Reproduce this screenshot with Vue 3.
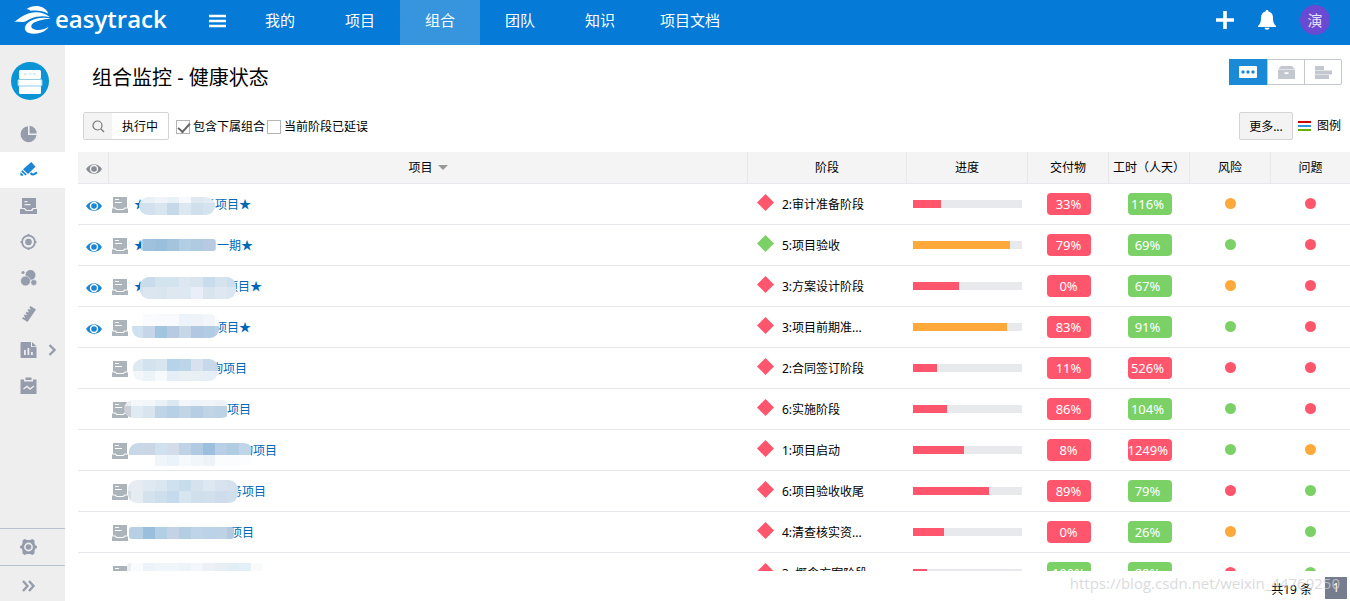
<script setup>
import { ref } from 'vue'

const nav = ['我的', '项目', '组合', '团队', '知识', '项目文档']
const activeNav = ref('组合')
const includeSub = ref(true)
const delayed = ref(false)

const side = [
  { id: 'pie', label: '概览' },
  { id: 'monitor', label: '监控' },
  { id: 'inbox', label: '项目' },
  { id: 'target', label: '目标' },
  { id: 'bubbles', label: '资源' },
  { id: 'ruler', label: '度量' },
  { id: 'report', label: '报表', more: true },
  { id: 'clip', label: '计划' },
]

const NAME_X = 134
const GRID_X = 131
const CELL = 12

/* mask: x/y/w/h of the covered area; bands: [y, height, first column, colours] */
const rows = [
  { eye: 1, star: 1, tail: '务项目★', tx: 203, mask: [139, 13, 76, 18], bands: [[13, 6, 0, '#e3ecf4 #e9f0f6 #f0f4f9 #e8f0f8 #f6f8fb #dfe8f1 #e3ecf4'], [19, 12, 0, '#cfe0ee #d2e1ed #d9e6ef #c5d9eb #dbe7f1 #cfdfec #d4e3ee']], stage: '2:审计准备阶段', d: 'r', p: 26, pc: 'r', dv: '33%', dc: 'r', h: '116%', hc: 'g', risk: 'o', issue: 'r' },
  { eye: 1, star: 1, tail: '一期★', tx: 217, mask: [141, 14, 75, 12], bands: [[14, 12, 0, '#b4d2e8 #9fc1dd #99bfdc #a4c3dd #b1cee4 #aecbe2 #b7cae2 #c5d7e9']], stage: '5:项目验收', d: 'g', p: 89, pc: 'o', dv: '79%', dc: 'r', h: '69%', hc: 'g', risk: 'g', issue: 'r' },
  { eye: 1, star: 1, tail: '项目★', tx: 226, mask: [140, 11, 96, 22], bands: [[11, 10, 0, '#c8dcec #c8dcec #d4e4ef #d3e3ef #dce7f1 #d8e5ef #c9dceb #d4e3ee #cddfec'], [21, 12, 0, '#d2e1ed #dbe6f0 #d9e5ef #dfe8f1 #dce8f2 #e9eef8 #d9e4ef #dfe8f2 #dae6f0']], stage: '3:方案设计阶段', d: 'r', p: 42, pc: 'r', dv: '0%', dc: 'r', h: '67%', hc: 'g', risk: 'o', issue: 'r' },
  { eye: 1, tail: '项目★', tx: 215, mask: [132, 7, 87, 24], bands: [[7, 12, 1, '#f9fbfd #f8fafd #f8fafd #edf3fa #eef3fa #f2f6fb #fbfcfd'], [19, 12, 0, '#cfe0ee #c5d6e8 #a2c5df #b7cae1 #c8d7e8 #b2c7e1 #b1cce3 #b7d0e5']], stage: '3:项目前期准...', d: 'r', p: 86, pc: 'o', dv: '83%', dc: 'r', h: '91%', hc: 'g', risk: 'g', issue: 'r' },
  { tail: '询项目', tx: 211, mask: [133, 11, 85, 22], bands: [[11, 12, 0, '#dfe9f2 #d2e3ef #d8e5ef #b7d3e9 #bdd5e8 #d8e2ee #c6d8e9 #c3d6e7'], [23, 10, 0, '#f3f7fb #edf4f9 #f7fafc #e5edf6 #e8f0f4 #e8f0f5 #e6eef7 #e5eef7']], stage: '2:合同签订阶段', d: 'r', p: 22, pc: 'r', dv: '11%', dc: 'r', h: '526%', hc: 'r', risk: 'r', issue: 'r' },
  { tail: '项目', tx: 227, mask: [124, 11, 107, 18], bands: [[11, 6, -1, '#e9ecf0 #f4f6f8 #f2f6f9 #eaf1f6 #dce9f2 #f2f6fa #edf3f8 #f0f4f8 #edf2f7'], [17, 12, -1, '#cbd0d8 #e0eaf2 #d8e5ef #bfd5e7 #b8d0e5 #c1d5e6 #b7cde3 #c1d4e5 #bdd3e5']], stage: '6:实施阶段', d: 'r', p: 31, pc: 'r', dv: '86%', dc: 'r', h: '104%', hc: 'g', risk: 'g', issue: 'r' },
  { tail: '询项目', tx: 241, mask: [129, 13, 124, 24], bands: [[13, 12, -1, '#c5d5e5 #c9d8e8 #cad5e6 #cfe0ee #d5dce9 #c0d3e6 #b2cae1 #9bbfdc #b9cfe5 #b1cde2 #bfd5e8'], [25, 11, 2, '#f0f5fa #eaf3f9 #f5f9fc #f1f6fb #edf3f8 #fafcfd #fbfcfd #fcfdfe']], stage: '1:项目启动', d: 'r', p: 47, pc: 'r', dv: '8%', dc: 'r', h: '1249%', hc: 'r', risk: 'g', issue: 'o' },
  { tail: '务项目', tx: 230, mask: [128, 9, 110, 23], bands: [[9, 11, -1, '#e4eaf0 #e6ecf2 #dfe9f1 #dae7f1 #cfe1ee #c8ddeb #d6e3ef #dee8f2 #d8e3ef #d5e2ed'], [20, 12, -1, '#d6dce3 #e5edf3 #d3e2ed #cddfed #c5dbed #d7e5f0 #cfdfec #d2e0ec #cedceb #cfe0ec']], stage: '6:项目验收收尾', d: 'r', p: 70, pc: 'r', dv: '89%', dc: 'r', h: '79%', hc: 'g', risk: 'r', issue: 'g' },
  { tail: '项目', tx: 230, mask: [129, 15, 105, 12], bands: [[15, 12, -1, '#b9cee0 #b6cfe4 #99bfdc #b1cee3 #c3d3e5 #b3cde3 #bfd4e9 #bbd2e8 #bed2e6 #b2c9e0']], stage: '4:清查核实资...', d: 'r', p: 28, pc: 'r', dv: '0%', dc: 'r', h: '26%', hc: 'g', risk: 'o', issue: 'g' },
  { tail: '', tx: 263, mask: [127, 10, 136, 12], bands: [[10, 12, -1, '#eceef1 #fafbfd #edf3fb #f0f5f9 #eff5f9 #edf4f9 #f3f6fb #edf1f5 #e7eff5 #e1eef6 #e4f0f7 #f8fafc']], stage: '3: 概念方案阶段', d: 'r', p: 13, pc: 'r', dv: '100%', dc: 'g', h: '88%', hc: 'g', risk: 'r', issue: 'g' },
]

const cells = (r) =>
  r.bands.flatMap(([y, h, c, list]) =>
    list.split(' ').map((fill, i) => ({ x: GRID_X + (c + i) * CELL - r.mask[0], y, h, fill })),
  )

const maskStyle = (r) => ({
  width: r.mask[2] + 'px',
  marginLeft: r.mask[0] - NAME_X - (r.star ? CELL : 0) + 'px',
  marginRight: r.tx - r.mask[0] - r.mask[2] + 'px',
})
</script>

<template>
  <div class="page">
    <header class="top">
      <a class="logo" href="#">
        <svg width="38" height="30" viewBox="0 0 38 30" aria-hidden="true">
          <path fill="#fff" d="M11.500 4C15 1.500 20 .500 24 1.300c5 1 8 3.700 9.300 7.500C28 5.600 21 5 15.500 5.800 14.500 4.800 13 4.200 11.500 4Z" />
          <path fill="#fff" d="M-.800 17C5 12.500 9 10 14 8.300c7-2 15-1.500 21 4C29 10.500 22 11 16 13.500c-3 1.300-4.500 3-8 3.500-3 .300-6-.500-8.800 0Z" />
          <path fill="#fff" d="M36 13.500c-6-1.500-13-1-18.500 1.500-6 2.500-9 7-7 10.500 2 3.500 9 4 15 2.300 4-1.200 6.800-3.300 8-6-4 2.700-9 3.700-13 3-4-.800-5.500-3.500-3-6C20.500 16 27 14.500 36 13.500Z" />
        </svg>
        <span>easytrack</span>
      </a>
      <button class="burger" aria-label="菜单">
        <svg width="17" height="14"><path d="M0 2h17M0 7h17M0 12h17" stroke="#fff" stroke-width="2.400" /></svg>
      </button>
      <nav>
        <a v-for="n in nav" :key="n" href="#" :class="{ on: n === activeNav }" @click.prevent="activeNav = n">{{ n }}</a>
      </nav>
      <div class="tools">
        <button aria-label="新建">
          <svg width="18" height="18"><path d="M9 0v18M0 9h18" stroke="#fff" stroke-width="3.600" /></svg>
        </button>
        <button aria-label="通知">
          <svg width="18" height="20" viewBox="0 0 18 20">
            <path fill="#fff" d="M9 0c1 0 1.500.700 1.500 1.500C13.500 2.300 15 4.500 15 8c0 4 .800 6 3 8v1H0v-1c2.200-2 3-4 3-8 0-3.500 1.500-5.700 4.500-6.500C7.500.700 8 0 9 0ZM6.500 17.800h5a2.500 2 0 0 1-5 0Z" />
          </svg>
        </button>
        <button class="user">演</button>
      </div>
    </header>

    <div class="body">
      <aside>
        <a class="badge-logo" href="#" aria-label="组合">
          <svg width="38" height="38">
            <circle cx="19" cy="19" r="19" fill="#0a94d6" />
            <rect x="8" y="8" width="22" height="9" rx="1.500" fill="#fff" />
            <path d="M13 12h3M17.500 12h3M22 12h3" stroke="#cfe8f5" stroke-width="1.500" />
            <rect x="8" y="23" width="22" height="9" rx="1.500" fill="#fff" />
            <rect x="7" y="17.500" width="24" height="6.500" rx="1" fill="#fff" stroke="#8fcdea" />
          </svg>
        </a>
        <a v-for="s in side" :key="s.id" href="#" class="item" :class="{ on: s.id === 'monitor' }" :aria-label="s.label">
          <svg width="18" height="18" viewBox="0 0 18 18" fill="currentColor">
            <template v-if="s.id === 'pie'">
              <path d="M8 1.200V10h8.500A8 8 0 1 1 8 1.200Z" />
              <path d="M9.600.800A8 8 0 0 1 16.700 8.400H9.600Z" />
            </template>
            <template v-else-if="s.id === 'monitor'">
              <path d="m11.300 1 4.200 4.800L8 13l-5-4.700Z" />
              <path d="m2.200 9 4.600 4.400-1.400 1.200L1.200 10.500ZM.500 11.300l3 2.700-1.300 1-1.900-.800Z" />
              <path d="M10.500 12c2 2.400 3.500 1.800 6.500-.600" fill="none" stroke="currentColor" stroke-width="2" />
            </template>
            <template v-else-if="s.id === 'inbox'">
              <path fill-rule="evenodd" d="M2 1h14v10h-3.500L11 13H6.500L5 11H2ZM4.500 4v1.200h3V4Zm0 3v1.200h6V7Z" />
              <path d="M0 12h4.200l1.500 2h6.600l1.500-2H17v5H0Z" />
            </template>
            <template v-else-if="s.id === 'target'">
              <circle cx="8.500" cy="9" r="6.400" fill="none" stroke="currentColor" stroke-width="1.800" />
              <circle cx="8.500" cy="9" r="3.300" />
              <path d="M7.500 1h2v2h-2ZM7.500 15h2v2h-2ZM.500 8h2v2h-2ZM14.500 8h2v2h-2Z" />
            </template>
            <template v-else-if="s.id === 'bubbles'">
              <circle cx="10.500" cy="6" r="5" />
              <circle cx="5.500" cy="12" r="4.900" stroke="#eee" stroke-width=".600" />
              <circle cx="13.800" cy="13.500" r="2.900" stroke="#eee" stroke-width=".500" />
              <circle cx="3" cy="3.500" r="1.600" />
            </template>
            <template v-else-if="s.id === 'ruler'">
              <path d="m10.500 1 5.500 3.500L7.500 17 2 13.500l1-1.400 1.300.900.700-1-1.300-.900 1.200-1.800 1.300.900.700-1-1.300-.900 1.200-1.800 1.300.900.700-1-1.300-.900 1.200-1.700 1.300.900.700-1-1.300-.900Z" />
            </template>
            <template v-else-if="s.id === 'report'">
              <path fill-rule="evenodd" d="M1.500 1H11v5h5.500v11h-15a1 1 0 0 1-1-1V2a1 1 0 0 1 1-1ZM4 9v5h1.800V9Zm3.500-2v7h1.800V7ZM11 11v3h1.800v-3Z" />
              <path d="M12 1 16.500 5.300H12Z" />
            </template>
            <template v-else>
              <path fill-rule="evenodd" d="M1 2.500h3v2h9v-2h3.500V17h-16V2.500Z" />
              <path d="M5.500.500h6v2.500h-6Z" />
              <path d="m3.500 12 3.500-2.500 3 2.500 4-3" fill="none" stroke="#eee" stroke-width="1.400" />
            </template>
          </svg>
          <svg v-if="s.more" class="chev" width="9" height="14"><path d="m1.500 2 5 5-5 5" fill="none" stroke="currentColor" stroke-width="2.400" /></svg>
        </a>
        <div class="fill"></div>
        <a class="item line" href="#" aria-label="设置">
          <svg width="18" height="18" viewBox="0 0 18 18" fill="currentColor">
            <path fill-rule="evenodd" d="M4.500 1 7 2h3l2.500-1 2 1.500v2.700l1 2.300 1.500.500v2l-1.500.500-1 2.300v2.700l-2 1.500L10 16H7l-2.500 1-2-1.500v-2.700l-1-2.300L0 10V8l1.500-.500 1-2.300V2.500ZM8.500 4.600a4.400 4.400 0 1 0 0 8.800 4.400 4.400 0 0 0 0-8.800Z" />
            <circle cx="8.500" cy="9" r="2.800" />
          </svg>
        </a>
        <a class="item line last" href="#" aria-label="展开">
          <svg width="18" height="18"><path d="m3 4 4.500 5L3 14M9 4l4.500 5L9 14" fill="none" stroke="currentColor" stroke-width="2.400" /></svg>
        </a>
      </aside>

      <main>
        <div class="title-row">
          <h1>组合监控 - 健康状态</h1>
          <div class="views">
            <button class="on" aria-label="健康状态">
              <svg width="18" height="12"><rect width="18" height="12" rx="1" fill="#fff" /><g fill="#1a8ad6"><circle cx="4" cy="6" r="1.700" /><circle cx="9" cy="6" r="1.700" /><circle cx="14" cy="6" r="1.700" /></g></svg>
            </button>
            <button aria-label="卡片">
              <svg width="17" height="13"><path fill="#c3c7cf" fill-rule="evenodd" d="M3 0h11l3 3.500H0ZM0 4h17v9H0Zm6.500 2.200v1.800h4V6.200Z" /></svg>
            </button>
            <button aria-label="甘特图">
              <svg width="17" height="13"><path fill="#c3c7cf" d="M0 0h9v4H0ZM0 4.500h17v4H0ZM0 9h14v4H0Z" /></svg>
            </button>
          </div>
        </div>

        <div class="toolbar">
          <button class="filter">
            <span class="lens"><svg width="13" height="13" fill="none" stroke="#777" stroke-width="1.200"><circle cx="5.500" cy="5.500" r="4.500" /><path d="m9 9 3 3" /></svg></span>
            <span class="state">执行中</span>
          </button>
          <label><input v-model="includeSub" type="checkbox" /><span>包含下属组合</span></label>
          <label><input v-model="delayed" type="checkbox" /><span>当前阶段已延误</span></label>
          <button class="more">更多...</button>
          <a class="legend" href="#"><i></i>图例</a>
        </div>

        <div class="table-box">
          <table>
            <colgroup>
              <col class="c-eye" /><col /><col class="c-stage" /><col class="c-prog" />
              <col class="c-num" /><col class="c-num" /><col class="c-num" /><col class="c-last" />
            </colgroup>
            <thead>
              <tr>
                <th aria-label="关注">
                  <svg class="eye" width="16" height="10" viewBox="0 0 16 10"><path fill="#888d93" fill-rule="evenodd" d="M0 5c4-6.500 12-6.500 16 0-4 6.500-12 6.500-16 0Zm8-4.200a4.200 4.200 0 1 0 0 8.400 4.200 4.200 0 0 0 0-8.400Z" /><circle cx="8" cy="5" r="2.800" fill="#888d93" /></svg>
                </th>
                <th>项目<svg class="sort" width="10" height="5"><path d="M0 0h10L5 5Z" fill="#999" /></svg></th>
                <th>阶段</th>
                <th>进度</th>
                <th>交付物</th>
                <th>工时（人天）</th>
                <th>风险</th>
                <th>问题</th>
              </tr>
            </thead>
            <tbody>
              <tr v-for="(r, i) in rows" :key="i">
                <td class="eye-cell">
                  <svg v-if="r.eye" class="eye" width="16" height="10" viewBox="0 0 16 10"><path fill="#1a86d6" fill-rule="evenodd" d="M0 5c4-6.500 12-6.500 16 0-4 6.500-12 6.500-16 0Zm8-4.200a4.200 4.200 0 1 0 0 8.400 4.200 4.200 0 0 0 0-8.400Z" /><circle cx="8" cy="5" r="2.800" fill="#1a86d6" /></svg>
                </td>
                <td>
                  <a class="name" href="#">
                    <svg class="file" width="16" height="16" viewBox="0 0 16 16"><path fill="#abb3bb" d="M1 0h14v10.500h-2.500L11 12H5l-1.500-1.500H1ZM0 11.500h3l1.500 1.500h7l1.500-1.500h3V16H0Z" /><path d="M3 2.500h4M3 5.500h7" stroke="#fff" /></svg>
                    <span v-if="r.star" class="star">★</span>
                    <svg class="mask" height="40" :style="maskStyle(r)">
                      <defs>
                        <clipPath :id="'m' + i"><rect x="0" :y="r.mask[1]" :width="r.mask[2]" :height="r.mask[3]" :rx="r.mask[3] > 12 ? 9 : 3" /></clipPath>
                      </defs>
                      <g :clip-path="`url(#m${i})`" shape-rendering="crispEdges">
                        <rect v-for="(c, k) in cells(r)" :key="k" :x="c.x" :y="c.y" width="12" :height="c.h" :fill="c.fill" />
                      </g>
                    </svg>
                    <span>{{ r.tail }}</span>
                  </a>
                </td>
                <td>
                  <div class="stage">
                    <svg width="17" height="17" :class="'k-' + r.d"><path d="m8.500 0 8.500 8.500-8.500 8.500L0 8.500Z" fill="currentColor" /></svg>
                    <span>{{ r.stage }}</span>
                  </div>
                </td>
                <td><div class="bar"><div :class="'b-' + r.pc" :style="{ width: r.p + '%' }"></div></div></td>
                <td><span class="pill" :class="'b-' + r.dc">{{ r.dv }}</span></td>
                <td><span class="pill hours" :class="'b-' + r.hc">{{ r.h }}</span></td>
                <td><span class="dot" :class="'b-' + r.risk"></span></td>
                <td><span class="dot" :class="'b-' + r.issue"></span></td>
              </tr>
            </tbody>
          </table>
        </div>

        <footer>
          <span class="total">共19 条</span>
          <button>1</button>
          <div class="mark">https://blog.csdn.net/weixin_44769250</div>
        </footer>
      </main>
    </div>
  </div>
</template>

<style>
body {
  margin: 0;
  overflow: hidden;
}
</style>

<style scoped>
.page {
  display: flex;
  flex-direction: column;
  height: 100vh;
  font: 12px/18px "Noto Sans", "Noto Sans CJK SC", sans-serif;
  color: #000;
  background: #fff;
}
.page * {
  box-sizing: border-box;
}
svg {
  display: block;
  flex: none;
}
button {
  padding: 0;
  border: 0;
  background: none;
  font: inherit;
  color: inherit;
  cursor: pointer;
}
a {
  color: inherit;
  text-decoration: none;
}
.top {
  display: flex;
  flex: none;
  align-items: stretch;
  height: 45px;
  background: #057ad6;
  color: #fff;
}
.logo {
  display: flex;
  align-items: flex-start;
  gap: 2px;
  width: 194px;
  padding: 5px 0 0 15px;
  font: 600 24px/28px "Open Sans", sans-serif;
}
.logo svg {
  overflow: visible;
}
.burger {
  display: flex;
  align-items: center;
  width: 46px;
  padding: 0 0 4px 15px;
}
nav {
  display: flex;
}
nav a {
  min-width: 80px;
  padding: 0 20px;
  font-size: 15px;
  line-height: 41px;
  text-align: center;
}
nav a.on {
  background: #3795de;
}
.tools {
  display: flex;
  align-items: center;
  gap: 24px;
  margin-left: auto;
  padding: 0 20px 5px 0;
}
.user {
  width: 30px;
  height: 30px;
  border-radius: 50%;
  background: #6a49d3;
  color: #e6e0f8;
  font-size: 15px;
}
.body {
  display: flex;
  flex: 1;
  min-height: 0;
}
aside {
  display: flex;
  flex: none;
  flex-direction: column;
  width: 65px;
  background: #eee;
  color: #959cab;
}
.badge-logo {
  padding: 17px 0 16px 11px;
}
.item {
  display: flex;
  flex: none;
  align-items: center;
  gap: 10px;
  height: 36px;
  padding-left: 20px;
}
.item.on {
  background: #fff;
  color: #1a86d6;
}
.item.line {
  height: 37px;
  border-top: 1px solid #b8c3d0;
}
.item.last {
  height: 36px;
  padding-top: 4px;
}
.fill {
  flex: 1;
}
main {
  display: flex;
  flex: 1;
  flex-direction: column;
  min-width: 0;
  padding-left: 13px;
}
.title-row {
  display: flex;
  justify-content: space-between;
  align-items: flex-start;
  padding: 14px 8px 0 14px;
}
h1 {
  margin: 0;
  font-size: 20px;
  font-weight: 400;
  line-height: 38px;
}
.views {
  display: flex;
  border: 1px solid #c3c7cf;
  border-radius: 2px;
}
.views button {
  display: flex;
  align-items: center;
  justify-content: center;
  width: 37px;
  height: 24px;
}
.views button + button {
  border-left: 1px solid #c3c7cf;
}
.views .on {
  margin: -1px 0 -1px -1px;
  width: 38px;
  height: 26px;
  background: #1a8ad6;
}
.toolbar {
  display: flex;
  align-items: center;
  margin: 15px 0 12px;
  padding: 0 9px 0 5px;
}
.filter {
  display: flex;
  margin-right: 7px;
  height: 28px;
  border: 1px solid #d4d4d4;
  border-radius: 2px;
}
.lens {
  display: flex;
  align-items: center;
  justify-content: center;
  width: 28px;
  height: 26px;
  background: #f3f3f3;
}
.state {
  width: 56px;
  line-height: 28px;
}
.toolbar label {
  display: flex;
  align-items: center;
  gap: 3px;
  margin-right: 2px;
}
.toolbar label span {
  padding-top: 2px;
}
.toolbar input {
  width: 14px;
  height: 14px;
  margin: 2px 0 0;
  border: 1px solid #b4b4b4;
  background: #fff;
  appearance: none;
}
.toolbar input:checked::before {
  content: "";
  display: block;
  width: 10px;
  height: 5px;
  margin: 2px 0 0 1px;
  border: solid #666;
  border-width: 0 0 2px 2px;
  transform: rotate(-48deg);
}
.more {
  margin-left: auto;
  width: 54px;
  height: 28px;
  padding-top: 2px;
  border: 1px solid #d4d4d4;
  border-radius: 2px;
  background: #f3f3f3;
}
.legend {
  display: flex;
  align-items: center;
  gap: 6px;
  margin-left: 5px;
}
.legend i {
  width: 13px;
  height: 10px;
  background: linear-gradient(#d80000 2px, #fff 2px 4px, #2f95e4 4px 6px, #fff 6px 8px, #62b400 8px);
}
.table-box {
  flex: 1;
  min-height: 0;
  overflow: hidden;
}
table {
  width: 100%;
  border-spacing: 0;
  table-layout: fixed;
}
.c-eye {
  width: 31px;
}
.c-stage {
  width: 159px;
}
.c-prog {
  width: 121px;
}
.c-num {
  width: 81px;
}
.c-last {
  width: 79px;
}
th {
  height: 32px;
  padding: 0;
  border: solid #e6e8ec;
  border-width: 0 1px 1px 0;
  background: #f4f4f4;
  font-weight: 400;
  white-space: nowrap;
}
th:last-child {
  border-right: 0;
}
th .eye {
  margin: 3px 0 0 8px;
}
.sort {
  display: inline-block;
  margin: 0 0 2px 5px;
}
td {
  height: 41px;
  padding: 0;
  border-bottom: 1px solid #e6e7ea;
}
.eye-cell .eye {
  margin: 4px 0 0 8px;
}
.name {
  display: flex;
  align-items: center;
  height: 40px;
  padding-left: 3px;
  color: #0067b8;
  white-space: nowrap;
}
.name span,
.stage span {
  padding-top: 2px;
}
.file {
  margin: 2px 6px 0 0;
}
.star {
  width: 12px;
}
.mask {
  position: relative;
}
.stage {
  display: flex;
  align-items: center;
  gap: 8px;
  padding-left: 9px;
}
.stage svg {
  margin-bottom: 4px;
}
.bar {
  height: 8px;
  margin: 0 6px;
  background: #e7e9ed;
}
.bar div {
  height: 8px;
}
.pill {
  display: block;
  width: 44px;
  height: 22px;
  margin: 0 auto;
  border-radius: 4px;
  color: #fff;
  font-size: 13px;
  line-height: 22px;
  text-align: center;
}
.hours {
  padding-right: 4px;
}
.dot {
  display: block;
  width: 11px;
  height: 11px;
  margin: 0 auto 1px;
  border-radius: 50%;
}
.b-r {
  background: #ff566d;
}
.b-g {
  background: #7bd166;
}
.b-o {
  background: #ffa93a;
}
.k-r {
  color: #ff566d;
}
.k-g {
  color: #7bd166;
}
footer {
  position: relative;
  display: flex;
  flex: none;
  align-items: center;
  justify-content: flex-end;
  gap: 13px;
  height: 30px;
  padding: 4px 3px 0 0;
}
.total {
  padding-top: 4px;
}
footer button {
  width: 22px;
  height: 22px;
  background: #757d8f;
  color: #fff;
}
.mark {
  position: absolute;
  top: 0;
  right: 10px;
  color: rgba(205, 205, 210, 0.75);
  font: 15px/24px "Open Sans", sans-serif;
  pointer-events: none;
}
</style>
